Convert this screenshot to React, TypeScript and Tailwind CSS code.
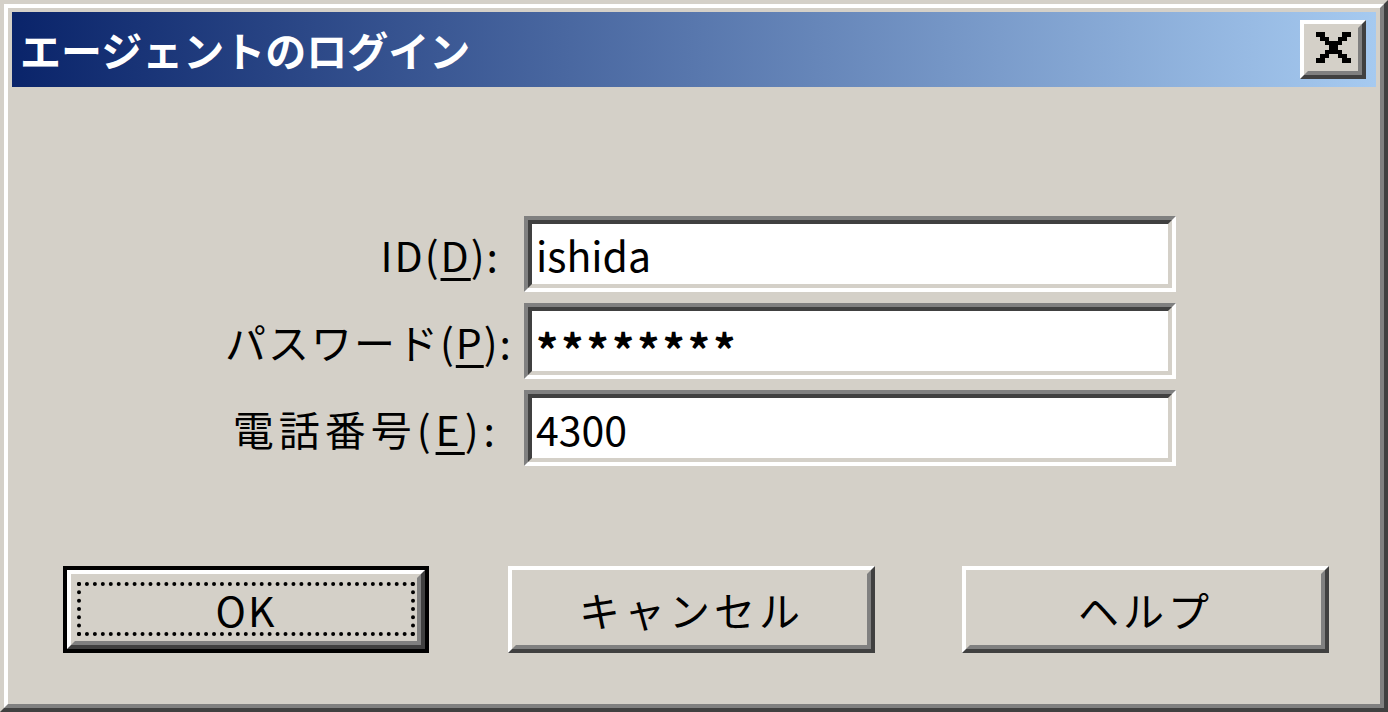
import React from "react";

const font = { fontFamily: '"Noto Sans CJK JP", "Noto Sans", sans-serif' };

type FieldProps = {
  before: string;
  key_: string;
  value: string;
  shift?: string;
  valueClass?: string;
};

function Field({ before, key_, value, shift = "tracking-[2px]", valueClass = "" }: FieldProps) {
  return (
    <div className="flex items-center h-[76px]">
      <div className="w-[488px] flex justify-end">
        <span className={`whitespace-nowrap text-[41px] leading-none text-black ${shift}`}>
          {before}(<span className="underline underline-offset-[6px] decoration-[3px]">{key_}</span>):
        </span>
      </div>
      <div className="ml-[24px] w-[652px] h-full border-4 border-t-[#808080] border-l-[#808080] border-b-white border-r-white">
        <div className="h-full border-4 border-t-[#404040] border-l-[#404040] border-b-[#d4d0c8] border-r-[#d4d0c8] bg-white flex items-center pl-[4px]">
          <span className={`text-[41px] leading-none text-black ${valueClass}`}>{value}</span>
        </div>
      </div>
    </div>
  );
}

function Button({ label, className = "" }: { label: string; className?: string }) {
  return (
    <div className={`w-[367px] h-[87px] border-4 border-t-white border-l-white border-b-[#404040] border-r-[#404040] ${className}`}>
      <div className="h-full border-4 border-t-[#d4d0c8] border-l-[#d4d0c8] border-b-[#808080] border-r-[#808080] flex items-center justify-center">
        <span className="text-[41px] leading-none text-black tracking-[4px]">{label}</span>
      </div>
    </div>
  );
}

function CloseGlyph() {
  const cells: [number, number, number][] = [
    [0, 0, 2], [6, 0, 2],
    [1, 1, 2], [5, 1, 2],
    [2, 2, 4],
    [3, 3, 2],
    [2, 4, 4],
    [1, 5, 2], [5, 5, 2],
    [0, 6, 2], [6, 6, 2],
  ];
  return (
    <svg width="35" height="31" viewBox="0 0 8 7" shapeRendering="crispEdges" className="-mt-[4px]">
      {cells.map(([x, y, w], i) => (
        <rect key={i} x={x} y={y} width={w} height={1} fill="#000" />
      ))}
    </svg>
  );
}

export default function App() {
  return (
    <div style={font} className="w-[1388px] h-[712px] border-4 border-t-[#d4d0c8] border-l-[#d4d0c8] border-b-[#404040] border-r-[#404040] overflow-hidden">
      <div className="h-full border-4 border-t-white border-l-white border-b-[#808080] border-r-[#808080] bg-[#d4d0c8] p-[4px] flex flex-col">
        {/* title bar */}
        <div className="h-[75px] shrink-0 flex items-center bg-linear-to-r/srgb from-[#0a246a] to-[#a6caf0]">
          <span className="pl-[8px] text-white font-bold text-[41px] leading-none">エージェントのログイン</span>
          <div className="ml-auto mr-[10px] w-[66px] h-[59px] border-4 border-t-white border-l-white border-b-[#404040] border-r-[#404040]">
            <div className="h-full border-4 border-t-[#d4d0c8] border-l-[#d4d0c8] border-b-[#808080] border-r-[#808080] bg-[#d4d0c8] flex items-center justify-center">
              <CloseGlyph />
            </div>
          </div>
        </div>

        {/* fields */}
        <div className="flex flex-col gap-[11px] mt-[129px]">
          <Field before="ID" key_="D" value="ishida" />
          <Field
            before="パスワード"
            key_="P"
            value="********"
            shift="tracking-[2px] -mr-[13px]"
            valueClass="font-bold text-[44px] tracking-[3px] translate-y-[7px]"
          />
          <Field before="電話番号" key_="E" value="4300" shift="tracking-[5px]" />
        </div>

        {/* buttons */}
        <div className="flex mt-[100px]">
          <div className="ml-[51px] w-[366px] h-[87px] border-4 border-black">
            <div className="h-full border-4 border-t-white border-l-white border-b-[#404040] border-r-[#404040]">
              <div className="h-full border-4 border-t-[#d4d0c8] border-l-[#d4d0c8] border-b-[#808080] border-r-[#808080] pt-[4px] pb-[5px] px-[2px]">
                <div className="h-full border-4 border-dotted border-black flex items-center justify-center">
                  <span className="text-[41px] leading-none text-black tracking-[2px]">OK</span>
                </div>
              </div>
            </div>
          </div>
          <Button label="キャンセル" className="ml-[79px]" />
          <Button label="ヘルプ" className="ml-[87px]" />
        </div>
      </div>
    </div>
  );
}
